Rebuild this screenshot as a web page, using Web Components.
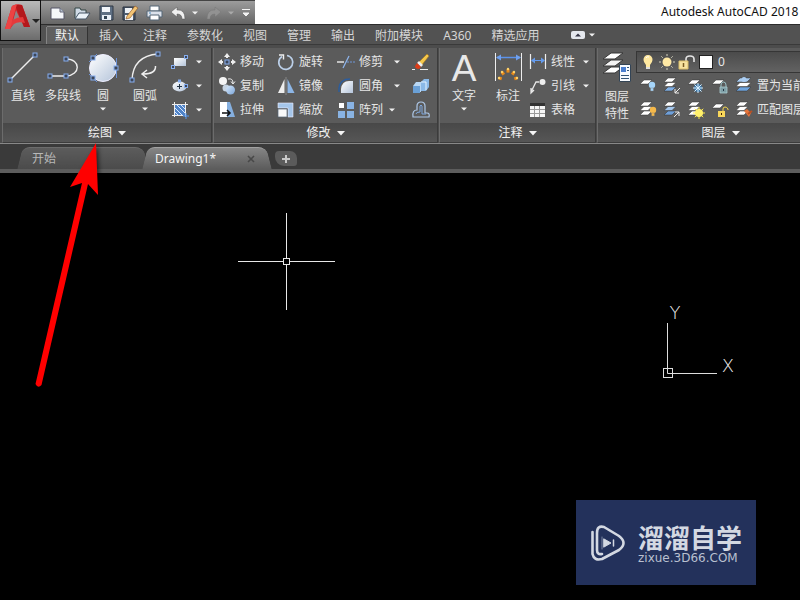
<!DOCTYPE html>
<html lang="zh-CN">
<head>
<meta charset="utf-8">
<title>Autodesk AutoCAD 2018</title>
<style>
html,body{margin:0;height:100%;background:#000;overflow:hidden}
body{font:12px/20px "Noto Sans","Noto Sans CJK SC",sans-serif;color:#e6e6e6}
</style>
</head>
<body>
<cad-app></cad-app>
<script>
const sq=(x,y,s=4)=>`<rect x="${x-s/2}" y="${y-s/2}" width="${s}" height="${s}" fill="#3c4658" stroke="#86aef0"/>`;
const ly=(x,y,f='#fff')=>`<path d="M${x+4} ${y}h8l-4 4h-8z" fill="${f}" stroke="#333" stroke-width=".5"/>`;
const stack=(f1='#fff',f2='#fff',f3='#fff')=>ly(2,11,f3)+ly(2,6.5,f2)+ly(2,2,f1);
const bulb=(x,y,f)=>`<circle cx="${x}" cy="${y}" r="3.2" fill="${f}"/><path d="M${x-1.5} ${y+3}h3v3h-3z" fill="${f}" stroke="#777" stroke-width=".4"/>`;
const rays=(x,y,a,b,c,n=8)=>Array.from({length:n},(_,i)=>{const t=i*2*Math.PI/n,p=Math.cos(t),q=Math.sin(t);return `<path d="M${x+a*p} ${y+a*q}L${x+b*p} ${y+b*q}" stroke="${c}"/>`}).join('');
const g=`<linearGradient id="g" x1="0" y1="0" x2="1" y2="1"><stop stop-color="#fff"/><stop offset="1" stop-color="#b4c4da"/></linearGradient><linearGradient id="b" x1="0" y1="0" x2="1" y2="1"><stop stop-color="#d8e8fa"/><stop offset="1" stop-color="#7ba6da"/></linearGradient>`;
const ICONS={
line:[36,36,`<path d="M5 30L30 5" stroke="#eee" stroke-width="1.4"/>`+sq(5,30)+sq(30,5)],
pline:[36,36,`<path d="M5 26H21C36 25 36 9 21 9" stroke="#eee" fill="none" stroke-width="1.4"/>`+sq(5,26)+sq(21,26)+sq(21,9)],
circle:[36,36,`<circle cx="18" cy="18" r="13.5" fill="url(#g)" stroke="#eef"/><path d="M31.500 8V28M4 12L12 4M4 24L12 32" stroke="#6d94d8"/>`+sq(8,8)+sq(8,28)+sq(31,18)],
arc:[36,36,`<path d="M5 30Q6 6 31 4" stroke="#eee" fill="none" stroke-width="1.400"/><path d="M28.500 16Q29 24 16 24M20 20L15 24L20 28" fill="none" stroke="#eee" stroke-width="1.500"/>`+sq(5,30)+sq(31,4)],
text:[36,36,`<text x="18" y="31" text-anchor="middle" font-family="Liberation Sans,sans-serif" font-size="37" fill="#e8e8e8">A</text>`],
dim:[36,36,`<path d="M5.500 3V31M31.500 3V31" stroke="#eee"/><path d="M7 7.500H30" stroke="#5c93ea" stroke-width="1.500"/><path d="M6 7.500l5-3v6zM31 7.500l-5-3v6z" fill="#6ea0f0"/>${[[9,28],[12,22],[18,19],[24,22],[27,28]].map(([x,y])=>`<path d="M${x} ${y}L${18+(x-18)*.7} ${31+(y-31)*.7}" stroke="#e98a19" stroke-width="3"/><circle cx="${x}" cy="${y}" r="1.200" fill="#ffd36b"/>`).join('')}`],
props:[36,36,`<path d="M12 17h12l-8 6H4z" fill="#fff" stroke="#363636"/><path d="M12 10h12l-8 6H4z" fill="#f4f4f4" stroke="#363636"/><path d="M12 3h12l-8 6H4z" fill="#fff" stroke="#363636"/><path d="M20.500 14.500h11v17h-11z" fill="#f8fbff" stroke="#345"/><path d="M22 17h5v5h-5z" fill="#4b7fd0"/><path d="M28 17.500h2M28 20.500h2M22 25.500h8M22 28.500h8" stroke="#357"/>`],
rect:[20,20,`<path d="M4 6h12v8H4z" fill="url(#g)"/>`+sq(3,15,3)+sq(16,5,3)],
ellipse:[20,20,`<ellipse cx="9.500" cy="10.500" rx="7" ry="5" fill="url(#g)"/><path d="M9.500 8v5M7 10.500h5" stroke="#234"/>`+sq(9.500,5,2)+sq(16,10,3)],
hatch:[20,20,`<path d="M5 5h11v11H5z" fill="#4f83c8"/><path d="M5 8l8 8M5 12l4 4M7 5l9 9M11 5l5 5" stroke="#d8e9ff"/><path d="M4.500 2v15M15.500 2v15M2 4.500h16M2 15.500h11" stroke="#eee"/><path d="M16 13v6M13 16h6" stroke="#5597ef"/>`],
move:[20,20,`<path d="M10 1l3 4h-6zM10 19l3-4h-6zM1 10l4-3v6zM19 10l-4-3v6z" fill="#eee"/><path d="M10 4v2M10 14v2M4 10h2M14 10h2" stroke="#eee" stroke-width="2"/>`+sq(10,10,4)],
rotate:[20,20,`<path d="M6 4.500A7 7 0 1 0 11 3.500" fill="none" stroke="#bcd0e9" stroke-width="1.700"/><path d="M3 3h4.500v4.500" fill="none" stroke="#eee" stroke-width="1.400"/>`],
trim:[20,20,`<path d="M1 10h7" stroke="#eee" stroke-width="1.400"/><path d="M11 10h8" stroke="#6e97d8" stroke-dasharray="2 1"/><path d="M7 16L13 4" stroke="#8eb4ec" stroke-width="1.300"/>`],
erase:[20,20,`<path d="M7 11L16 2l2 2-8 10z" fill="#f4c74b" stroke="#a8771d" stroke-width=".6"/><path d="M8 9l4 4-2 2-4-4z" fill="#eee"/><path d="M6 11l4 4-2 2q-4 0-4-3z" fill="#dd3c17"/><path d="M1 17.500h3M9 17.500h8" stroke="#eee"/>`],
copy:[20,20,`<circle cx="6" cy="5" r="4" fill="#f5f5f5"/><circle cx="9" cy="12" r="3.500" fill="#c7d4e2"/><circle cx="13.500" cy="14" r="4.500" fill="url(#b)"/><path d="M11 3q5-1 5 4M14 5.500l2 2.500 2-2.500" fill="none" stroke="#eee"/>`],
mirror:[20,20,`<path d="M8.500 3v14H2z" fill="#eee"/><path d="M11.500 3v14h7z" fill="#8db6e6"/><path d="M10 1v18" stroke="#888"/>`],
fillet:[20,20,`<path d="M5 17V13Q6 5 13 5h4v12z" fill="url(#g)"/><path d="M3 16V12Q4 3 14 3" fill="none" stroke="#2d5d9c" stroke-width="1.500"/>`],
explode:[20,20,`<path d="M2 10l3-4h7l-2 4v6H2z" fill="#b8d7f4"/><path d="M2 10h7v7H2z" fill="#6aa0d6"/><path d="M10 6l3-3h5v8l-3 4h-5z" fill="#8bb9e7"/><path d="M10 6h5v8" stroke="#e5f2ff" fill="none"/>`],
stretch:[20,20,`<path d="M3 2h7v15H3z" fill="#fff"/><path d="M10 2h3l5 15h-8z" fill="#85afdf"/><path d="M5 13h8M10 10l3 3-3 3" fill="none" stroke="#111" stroke-width="1.500"/>`],
scale:[20,20,`<path d="M2 3h15v14h-5V8H2z" fill="#a5c6ea" stroke="#eef" stroke-width=".6"/><path d="M2 9h9v8H2z" fill="#f8f8f8" stroke="#567" stroke-width=".7"/>`],
array:[20,20,`<path d="M11 2h7v7h-7zM2 11h7v7H2zM11 11h7v7h-7z" fill="#89b3e3"/><path d="M3 3h5v5H3z" fill="#fff"/>`],
offset:[20,20,`<path d="M2 17h16q1-4-2-4h-2V6q0-4-4-4T6 6v4q-5 0-4 7z" fill="none" stroke="#aec8e8" stroke-width="1.200"/><path d="M5 14q0-2 4-2V6q1-2 2 0v8h4" fill="none" stroke="#7fa8de"/>`],
linear:[20,20,`<path d="M2.500 2v15M17.500 2v15" stroke="#eee" stroke-width="1.200"/><path d="M4 8.500h12" stroke="#649bed"/><path d="M3 8.500l4-3v6zM17 8.500l-4-3v6z" fill="#649bed"/>`],
leader:[20,20,`<circle cx="14.500" cy="6" r="3" fill="#eee"/><path d="M11 6H8L3 16M3 12v5l3-3" fill="none" stroke="#e8e8e8" stroke-width="1.300"/>`],
table:[20,20,`<path d="M2 3h15v14H2z" fill="#f5f5f5"/><path d="M2 3h15v3H2z" fill="#333"/><path d="M6.500 6v11M11.500 6v11M2 9.500h15M2 13.500h15" stroke="#999"/>`],
bulb:[20,20,`<path d="M10 3a4.500 4.500 0 0 0-4.500 5q0 2 2.500 5v2h4v-2q2.500-3 2.500-5A4.500 4.500 0 0 0 10 3z" fill="#ffe8a0"/><path d="M8 15h4v2H8z" fill="#ddd"/><path d="M8 6q1-2 3-1" stroke="#fff" fill="none"/>`],
sun:[20,20,rays(10,10,6,8,'#d5d2bd')+`<circle cx="10" cy="10" r="4.500" fill="#ffe9a5"/>`],
lock:[20,20,`<path d="M10 9V7q0-3 4-3t4 3v3" fill="none" stroke="#e5e5e5" stroke-width="1.600"/><path d="M3 9h9v8H3z" fill="#f7e3a0" stroke="#d9bd69"/><path d="M7.500 11v4" stroke="#7a5c22" stroke-width="1.500"/>`],
l1:[20,20,ly(2,4)+bulb(14,9,'#a6d5fa')],
l2:[20,20,stack('#fff','#fff','#7faee4')+`<path d="M18 12l-5 5M13 13v4h4" fill="none" stroke="#eee"/>`],
l3:[20,20,ly(2,4)+`<circle cx="12" cy="12" r="4" fill="#3d76a8"/>`+rays(12,12,0,5,'#d9f1ff')],
l4:[20,20,ly(2,4)+`<path d="M11 11V9q0-3 2.500-3T16 9v2" fill="none" stroke="#9bc3c9"/><path d="M10 11h7v6h-7z" fill="#7f9fa6" stroke="#a9cbd0" stroke-width=".8"/><path d="M13.500 13v2" stroke="#234"/>`],
l5:[20,20,stack('#a8caef','#fff','#6fa4dd').replaceAll('h8l','h11l').replaceAll('h-8','h-11')+`<circle cx="10" cy="3.500" r="2.500" fill="#aacdf2"/>`],
l6:[20,20,stack()+bulb(15,10,'#f5b84a')],
l7:[20,20,stack('#fff','#a4c6eb','#6f9fd8')+`<path d="M12 17l5-5M13 12h4v4" fill="none" stroke="#eee"/>`],
l8:[20,20,stack()+rays(13,13,3,6,'#ffea46')+`<circle cx="13" cy="13" r="4" fill="#fff06b"/>`],
l9:[20,20,ly(2,4)+`<path d="M13 11V9q0-2 2-2t3 2v1" fill="none" stroke="#f4d64e"/><path d="M8 11h7v6H8z" fill="#f7d65a"/><path d="M11.500 13v2" stroke="#420"/>`],
l10:[20,20,stack()+`<path d="M10 11l5 6 2-4-4-4z" fill="#e4753b"/><path d="M14 14l4-3" stroke="#b95024" stroke-width="2"/>`],
fnew:[18,18,`<path d="M2 4h9l4 4v7H2z" fill="#f4f6fa" stroke="#556"/><path d="M11 4v4h4" fill="#b5c2d1" stroke="#667"/>`],
fopen:[18,18,`<path d="M2 14V4h5l1 2h5v3" fill="#cfdae6" stroke="#344"/><path d="M2 15l4-6h11l-4 6z" fill="#e9f1f9" stroke="#456"/>`],
fsave:[18,18,`<path d="M3 2h13v14H3z" fill="#5e6f83" stroke="#2e3945"/><path d="M5 3h8v5H5z" fill="#f3f6fa"/><path d="M5 11h9v5H5z" fill="#e8eef5"/><path d="M7 12h3v3H7z" fill="#345"/>`],
fsaveas:[18,18,`<path d="M2 3h12v13H2z" fill="#4e5d70" stroke="#29313c"/><path d="M4 4h7v5H4zM4 11h8v5H4z" fill="#eef2f6"/><path d="M6 12L14 2l3 2-8 10-4 1z" fill="#f2c475" stroke="#8a5120" stroke-width=".6"/>`],
fprint:[18,18,`<path d="M5 2h9v5H5z" fill="#fff" stroke="#567"/><path d="M2 7h15v6H2z" fill="#dce2eb" stroke="#567"/><path d="M5 11h9v5H5z" fill="#fff" stroke="#567"/><path d="M4 9h2" stroke="#48b"/>`],
undo:[18,18,`<path d="M2 8l6-5v3q8-1 8 9h-3q0-5-5-5v3z" fill="#f0f0f0" stroke="#555" stroke-width=".5"/>`],
redo:[18,18,`<path d="M16 8l-6-5v3Q2 5 2 15h3q0-5 5-5v3z" fill="#929292" stroke="#777" stroke-width=".5"/>`],
logo:[28,28,`<path d="M1 26L8 3q5-3 10-1l8 22h-6l-2-5h-7L6 26z" fill="#d32127"/><path d="M12 7l4 9-7 2z" fill="#8f8587"/><path d="M18 2l8 22h-6L11 2z" fill="#b3181c"/><path d="M2 26q5-12 17-12l2 6Q10 17 6 26z" fill="#e43a3b"/><path d="M1 26L8 3l5-2L6 26z" fill="#ed4343"/>`],
arrow:[8,8,`<path d="M1 2.500h6L4 5.500z" fill="#f0f0f0"/>`],
arrowL:[8,8,`<path d="M0 2h8L4 6.500z" fill="#f5f5f5"/>`],
arrowD:[8,8,`<path d="M0 2h8L4 6z" fill="#222"/>`],
arrowG:[8,8,`<path d="M1 2.500h6L4 5.500z" fill="#aaa"/>`],
more:[10,10,`<path d="M1 1.500h8M2 5h6L5 8z" fill="#f3f3f3" stroke="#f3f3f3"/>`],
mini:[14,8,`<rect width="14" height="8" rx="2" fill="#e5e8ee"/><path d="M4 5.500h6L7 2.500z" fill="#334"/>`],
close:[10,10,`<path d="M2 2l6 6M8 2L2 8" stroke="#484848" stroke-width="1.600"/>`],
plus:[12,12,`<path d="M6 2v8M2 6h8" stroke="#c8c8c8" stroke-width="2"/>`]
};
const define=(name,css,html)=>{
  const t=document.createElement('template');
  customElements.define(name,class extends HTMLElement{
    connectedCallback(){
      if(this.shadowRoot)return;
      t.innerHTML=`<style>*{box-sizing:border-box}button,a{font:inherit;color:inherit;border:0;padding:0;margin:0;background:none;text-decoration:none;white-space:nowrap}${css}</style>`+(typeof html==='function'?html(this):html);
      this.attachShadow({mode:'open'}).append(t.content.cloneNode(true));
    }
  });
};
const ic=n=>`<cad-icon name="${n}"></cad-icon>`;

define('cad-icon',':host{display:block;flex:none}svg{display:block;overflow:visible}',e=>{
  const [w,h,d]=ICONS[e.getAttribute('name')];
  return `<svg width="${w}" height="${h}" viewBox="0 0 ${w} ${h}" aria-hidden="true"><defs>${g}</defs>${d}</svg>`;
});
define('big-tool',`:host{display:block}button{display:flex;flex-direction:column;align-items:center;width:100%}
  .t{white-space:pre-line;line-height:20px}:host([two]) .t{line-height:17px;padding-top:2px}cad-icon+.t+cad-icon{margin-top:-1px}`,
  e=>`<button>${ic(e.getAttribute('icon'))}<span class="t"><slot></slot></span>${e.hasAttribute('drop')?ic('arrow'):''}</button>`);
define('small-tool',`:host{display:flex;align-items:center;height:24px}button{display:flex;align-items:center;gap:3px}.d{margin-left:auto}:host([near]) .d{margin-right:5px}`,
  e=>`<button aria-label="${e.getAttribute('icon')}">${ic(e.getAttribute('icon'))}<slot></slot></button>${e.hasAttribute('drop')?`<button class="d" aria-label="更多">${ic('arrow')}</button>`:''}`);
define('ribbon-panel',`:host{display:flex;flex:none;flex-direction:column;border:1px solid #3c3c3c;border-top:0;border-left-color:#6c6c6c;background:#5b5b5b}
  .b{display:flex;height:77px;padding-top:2px}.f{display:flex;justify-content:center;align-items:center;gap:6px;height:19px;line-height:19px;background:linear-gradient(#484848,#565656);color:#f2f2f2}`,
  e=>`<div class="b"><slot></slot></div><button class="f">${e.getAttribute('label')}${ic('arrowL')}</button>`);

define('app-button',`:host{display:block}button{display:flex;align-items:center;width:41px;height:41px;padding-left:3px;border:1px solid #111;background:linear-gradient(#b9b9b9,#6c6c6c)}cad-icon:first-child{margin-bottom:8px}`,
  `<button aria-label="应用程序菜单">${ic('logo')}${ic('arrowD')}</button>`);
define('title-bar',`:host{display:flex;height:24px;background:#fff;color:#111}
  .q{display:flex;align-items:center;width:214px;flex:none;padding-left:8px;background:linear-gradient(#9c9c9c,#666);border-top:1px solid #444}
  .q button{width:24px;height:22px;display:flex;align-items:center;flex:none}.q .u{width:22px}.q .n{width:14px}
  .t{margin-left:auto;white-space:nowrap;width:139px;line-height:24px}`,
  `<div class="q">${['fnew','fopen','fsave','fsaveas','fprint'].map(n=>`<button aria-label="${n}">${ic(n)}</button>`).join('')}<button class="u" aria-label="undo">${ic('undo')}</button><button class="n" aria-label="撤销列表">${ic('arrow')}</button><button class="u" aria-label="redo">${ic('redo')}</button><button class="n" aria-label="重做列表">${ic('arrowG')}</button><button class="n" aria-label="自定义">${ic('more')}</button></div><span class="t">Autodesk AutoCAD 2018</span>`);
define('menu-tabs',`:host{display:flex;align-items:flex-end;gap:4px;height:20px;padding-left:6px;background:#525252;border-top:1px solid #2c2c2c;color:#d6d6d6}
  a{padding:0 8px;height:17px;line-height:17px}a.on{background:#5f5f5f;color:#f2f2f2;box-shadow:-1px 0 #858585,0 -1px #858585,1px 0 #333}
  button{display:flex;align-items:center;gap:3px;height:19px;margin-left:20px}`,
  ['默认','插入','注释','参数化','视图','管理','输出','附加模块','A360','精选应用'].map((n,i)=>`<a href="#"${i?'':' class="on"'}>${n}</a>`).join('')+`<button aria-label="最小化功能区">${ic('mini')}${ic('arrow')}</button>`);

define('layer-box',`:host{display:block;flex:1}
  .c{display:flex;align-items:center;width:100%;height:22px;margin:1px 0;padding-left:1px;border:1px solid #363636;background:linear-gradient(#4b4b4b,#626262)}
  .c cad-icon{margin-right:-1px}.s{width:14px;height:14px;background:#fff;border:1px solid #222;margin:0 5px 0 4px}
  .r{display:flex;align-items:center;height:24px;gap:4px;padding-left:2px}.r button{display:flex}.r .w{margin-left:-1px}`,
  `<button class="c" aria-label="当前图层 0">${ic('bulb')}${ic('sun')}${ic('lock')}<span class="s"></span>0</button>
  ${[[1,'置为当前'],[6,'匹配图层']].map(([k,t])=>`<div class="r">${[0,1,2,3,4].map(i=>`<button aria-label="图层工具 ${k+i}">${ic('l'+(k+i))}</button>`).join('')}<button class="w">${t}</button></div>`).join('')}`);

define('cad-ribbon',`:host{display:flex;height:100px;gap:1px;padding:3px 0 0 2px;background:#4c4c4c;border-top:1px solid #3a3a3a;border-bottom:1px solid #888;overflow:hidden}
  .p1{width:210px}.p2{width:225px}.p3{width:157px}.p4{width:247px}.col{width:36px;padding-left:3px}.g{display:grid;grid-template-columns:59px 60px 65px 20px;column-gap:0;padding-left:3px;align-content:start}
  .g small-tool:nth-child(4n){margin-left:10px}.w38{width:38px}.w40{width:40px}.w44{width:44px}.w48{width:48px}.c3{width:62px}`,
  `<ribbon-panel class="p1" label="绘图"><big-tool class="w40" icon="line">直线</big-tool><big-tool class="w40" icon="pline">多段线</big-tool><big-tool class="w40" icon="circle" drop>圆</big-tool><big-tool class="w44" icon="arc" drop>圆弧</big-tool>
   <div class="col">${['rect','ellipse','hatch'].map(n=>`<small-tool icon="${n}" drop></small-tool>`).join('')}</div></ribbon-panel>
  <ribbon-panel class="p2" label="修改"><div class="g">
   <small-tool icon="move">移动</small-tool><small-tool icon="rotate">旋转</small-tool><small-tool icon="trim" drop>修剪</small-tool><small-tool icon="erase"></small-tool>
   <small-tool icon="copy">复制</small-tool><small-tool icon="mirror">镜像</small-tool><small-tool icon="fillet" drop>圆角</small-tool><small-tool icon="explode"></small-tool>
   <small-tool icon="stretch">拉伸</small-tool><small-tool icon="scale">缩放</small-tool><small-tool icon="array" drop near>阵列</small-tool><small-tool icon="offset"></small-tool></div></ribbon-panel>
  <ribbon-panel class="p3" label="注释"><big-tool class="w48" icon="text" drop>文字</big-tool><big-tool class="w40" icon="dim">标注</big-tool>
   <div class="c3"><small-tool icon="linear" drop>线性</small-tool><small-tool icon="leader" drop>引线</small-tool><small-tool icon="table">表格</small-tool></div></ribbon-panel>
  <ribbon-panel class="p4" label="图层"><big-tool two class="w38" icon="props">图层<br>特性</big-tool><layer-box></layer-box></ribbon-panel>`);

define('doc-tabs',`:host{display:flex;align-items:flex-end;height:29px;padding-left:20px;background:#3a3a3a;border-bottom:4px solid #5c5c5c}
  .tab{position:relative;isolation:isolate;display:flex;align-items:center;height:22px;width:126px;padding:1px 10px 0 12px;color:#b8b8b8}
  .tab::before{content:"";position:absolute;z-index:-1;inset:0 30% 0 0;background:linear-gradient(#5c5c5c,#4b4b4b);border-top:1px solid #6c6c6c;border-radius:7px 0 0 0;transform:skewX(-14deg)}
  .tab::after{content:"";position:absolute;z-index:-1;inset:0 0 0 50%;background:linear-gradient(#5c5c5c,#4b4b4b);border-top:1px solid #6c6c6c;border-radius:0 8px 0 0;transform:skewX(14deg)}
  .on{margin-left:-1px;width:124px;padding-left:10px;padding-right:13px;color:#f5f5f5}.on::before,.on::after{background:linear-gradient(#858585,#5c5c5c);border-color:#a2a2a2}.on button{margin-left:auto}
  .plus{display:flex;align-items:center;justify-content:center;width:22px;height:15px;margin:0 0 3px 6px;background:#5b5b5b;border-radius:4px 7px 3px 9px}`,
  `<div class="tab"><a href="#">开始</a></div><div class="tab on"><a href="#">Drawing1*</a><button aria-label="关闭">${ic('close')}</button></div><button class="plus" aria-label="新图形">${ic('plus')}</button>`);

define('site-mark',`:host{display:flex;align-items:center;gap:13px;width:180px;height:85px;padding-left:14px;background:#23315b;color:#d3d8e2}
  strong{display:block;font:700 26px/30px "Noto Sans CJK SC",sans-serif}span{display:block;font:12px/12px "DejaVu Sans",sans-serif;color:#b9c0d0}svg{display:block;flex:none}`,
  `<svg width="35" height="38" viewBox="0 0 35 38" fill="none" stroke="#d3d8e2" stroke-width="2.600" stroke-linecap="round" stroke-linejoin="round" aria-hidden="true"><path d="M2.500 8V30Q4 37 12 35L29 26Q38 19 29 12L14 3Q7 1 7 9V26Q7 31 12 30"/><path d="M12 13V25" stroke="#7e89a5" stroke-width="1"/><path d="M14 15l7 4-7 4z" fill="#d3d8e2" stroke-width="1"/><path d="M23.500 16v6" stroke-width="1.500"/></svg><div><strong>溜溜自学</strong><span>zixue.3D66.COM</span></div>`);
define('drawing-area',`:host{display:block;position:relative;flex:1;background:#000}svg,site-mark{position:absolute}
  .x{left:238px;top:40px}.u{left:660px;top:127px}.a{left:30px;top:-31px;z-index:2;overflow:visible;filter:drop-shadow(2px 2px 2px #0009)}site-mark{left:576px;bottom:15px}`,
  `<svg class="x" width="98" height="98" stroke="#e8e8e8" fill="none" aria-hidden="true"><path d="M48.500 0V45M48.500 52V97M0 48.500H45M52 48.500H97"/><rect x="45.500" y="45.500" width="6" height="6"/></svg>
  <svg class="u" width="84" height="84" stroke="#ddd" fill="none"><path d="M7.500 23V73.500H57"/><rect x="3.500" y="68.500" width="9" height="9"/><g stroke="none" fill="#eee" text-anchor="middle" font-family="DejaVu Sans Light,DejaVu Sans,sans-serif" font-weight="200" font-size="18"><text x="15" y="19">Y</text><text x="68" y="72">X</text></g></svg>
  <svg class="a" width="75" height="250" fill="#f00" aria-hidden="true"><path d="M66 1L68 53 58 42 11.500 243Q8 247 5.500 242L52 41 40 45z"/></svg>
  <site-mark></site-mark>`);
define('cad-app',`:host{display:flex;flex-direction:column;height:100vh;overflow:hidden}
  .top{display:grid;grid-template-columns:41px minmax(0,1fr);background:#525252}app-button{height:41px}`,
  `<div class="top"><app-button></app-button><div><title-bar></title-bar><menu-tabs></menu-tabs></div></div><cad-ribbon></cad-ribbon><doc-tabs></doc-tabs><drawing-area></drawing-area>`);
</script>
</body>
</html>
